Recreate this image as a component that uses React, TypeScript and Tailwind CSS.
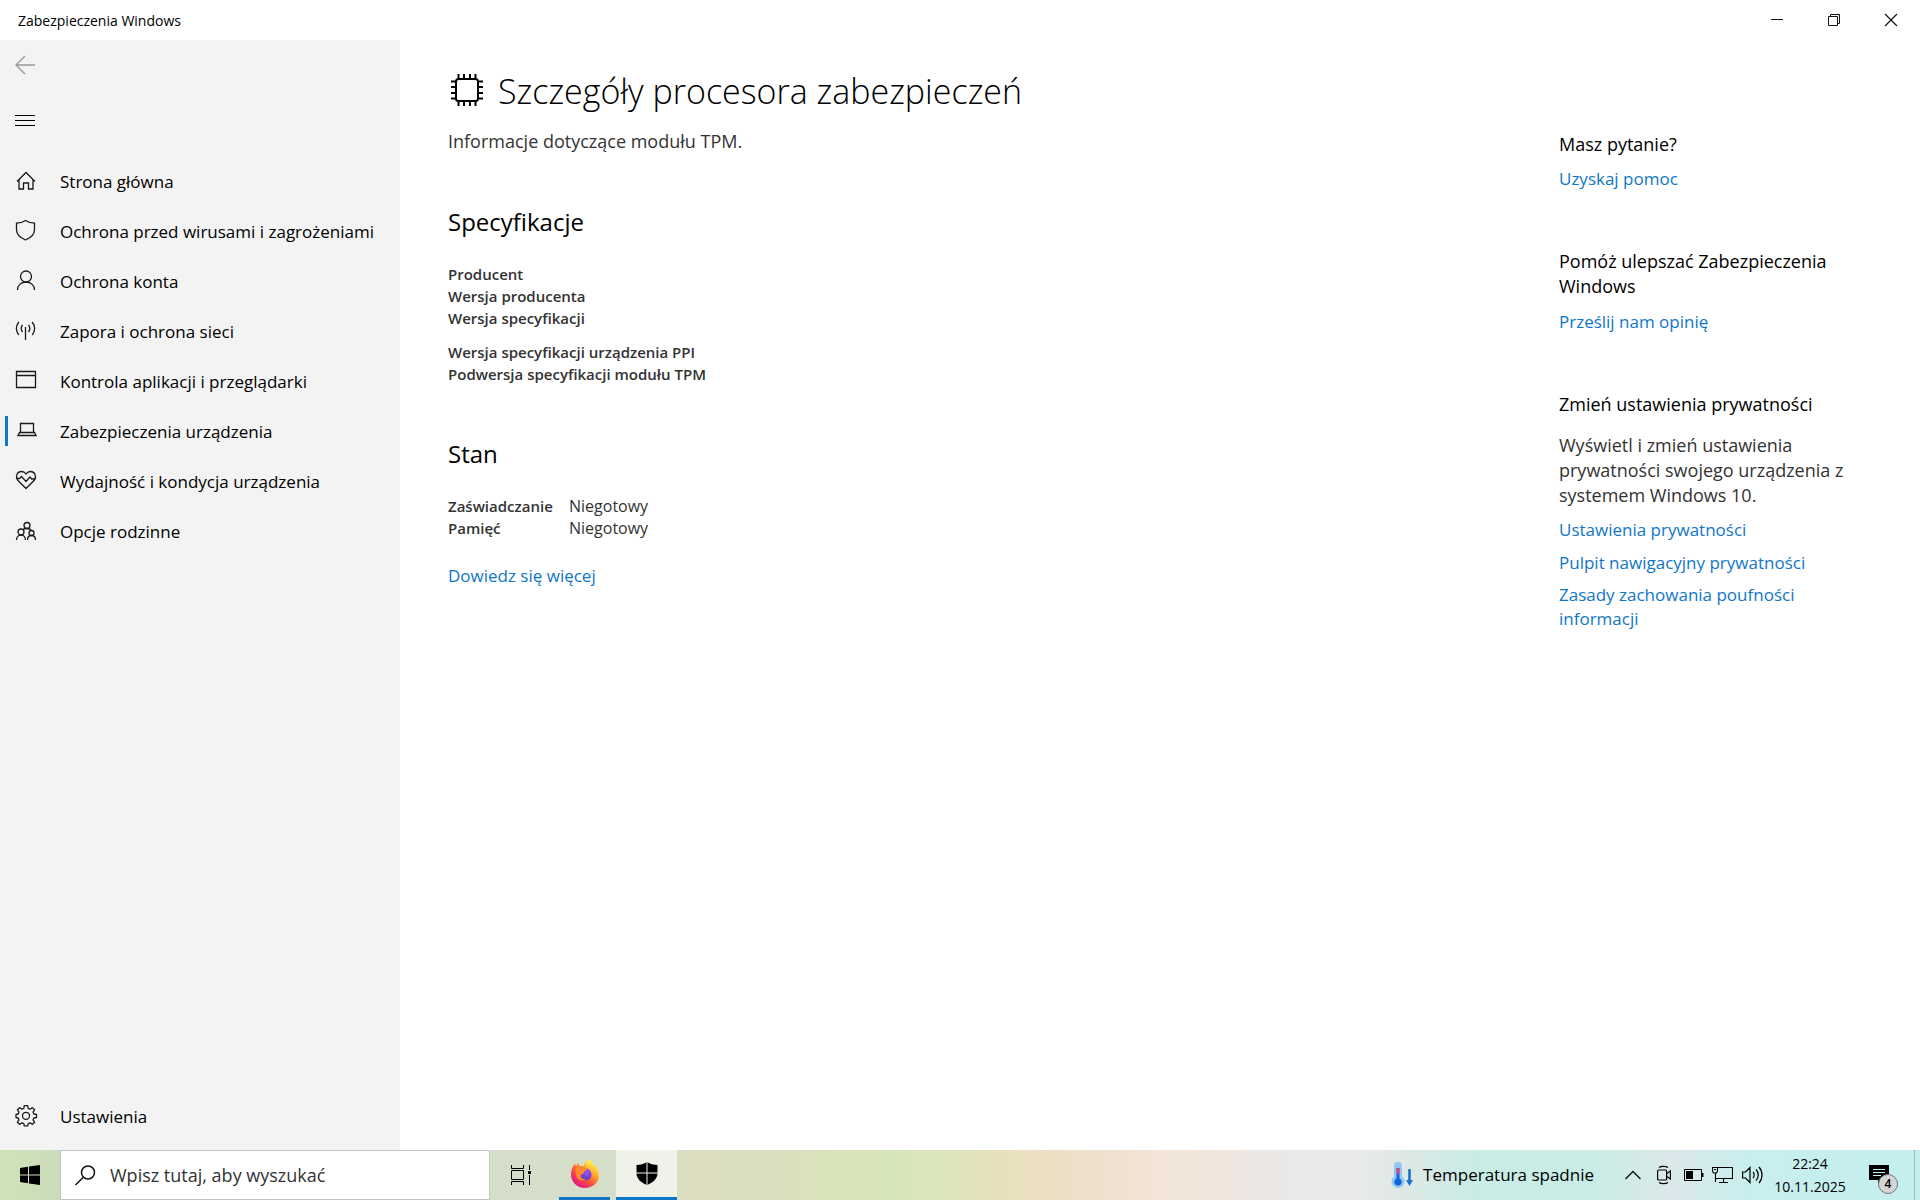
import React from 'react';

interface NavItemProps {
    label: string;
    active?: boolean;
    children: React.ReactNode;
}

const NavItem: React.FC<NavItemProps> = ({ label, active, children }) => {
    return (
        <button
            type="button"
            aria-current={active ? 'page' : undefined}
            className="flex h-[50px] w-full items-center pl-[5px] text-left text-[17px] leading-6 whitespace-nowrap text-black"
        >
            <span className={active ? 'h-[30px] w-[3px] bg-[#0f76c8]' : 'h-[30px] w-[3px]'} />
            <svg
                className="mr-[22px] ml-[6px] h-6 w-6 shrink-0"
                viewBox="0 0 24 24"
                fill="none"
                stroke="#1a1a1a"
                strokeWidth="1.3"
                aria-hidden="true"
            >
                {children}
            </svg>
            <span className="pt-0.5">{label}</span>
        </button>
    );
};

const TitleBar: React.FC = () => {
    return (
        <header className="flex h-10 shrink-0 items-center justify-between bg-white">
            <span className="pt-0.5 pl-[18px] text-sm text-black">Zabezpieczenia Windows</span>
            <div className="flex h-full">
                <button type="button" aria-label="Minimalizuj" className="flex w-[57px] items-center justify-center">
                    <svg width="14" height="14" viewBox="0 0 14 14" stroke="#111" aria-hidden="true">
                        <path d="M1 6.5h12" />
                    </svg>
                </button>
                <button type="button" aria-label="Przywróć" className="flex w-[57px] items-center justify-center">
                    <svg width="14" height="14" viewBox="0 0 14 14" fill="none" stroke="#111" aria-hidden="true">
                        <path d="M1.5 3.5h9v9h-9zM3.5 3.5v-2h9v9h-2" />
                    </svg>
                </button>
                <button type="button" aria-label="Zamknij" className="flex w-[58px] items-center justify-center">
                    <svg width="14" height="14" viewBox="0 0 14 14" stroke="#111" strokeWidth="1.2" aria-hidden="true">
                        <path d="M1 1l12 12M13 1L1 13" />
                    </svg>
                </button>
            </div>
        </header>
    );
};

const Sidebar: React.FC = () => {
    return (
        <nav className="flex w-[400px] shrink-0 flex-col bg-[#f3f3f3] pb-[9px]">
            <button type="button" aria-label="Wstecz" className="flex h-[50px] w-[50px] items-center justify-center">
                <svg width="20" height="20" viewBox="0 0 20 20" fill="none" stroke="#999" strokeWidth="1.4" aria-hidden="true">
                    <path d="M10 1L1 10l9 9M1 10h19" />
                </svg>
            </button>
            <button type="button" aria-label="Menu" className="mt-[6px] mb-[10px] flex h-[50px] w-[50px] items-center justify-center">
                <svg width="20" height="12" viewBox="0 0 20 12" stroke="#000" aria-hidden="true">
                    <path d="M0 .5h20M0 5.5h20M0 10.5h20" />
                </svg>
            </button>
            <NavItem label="Strona główna">
                <path d="M3 12.5l9-9 9 9M5 11v9h4.500v-6h5v6H19v-9" />
            </NavItem>
            <NavItem label="Ochrona przed wirusami i zagrożeniami">
                <path d="M11.500 1.500c3 2 6 2.700 9 2.700v6.300c0 5-4 8.500-9 10.500-5-2-9-5.500-9-10.500V4.200c3 0 6-.7 9-2.700z" />
            </NavItem>
            <NavItem label="Ochrona konta">
                <circle cx="12" cy="7.500" r="5.500" />
                <path d="M3.500 21c0-5 4-8 8.500-8s8.500 3 8.500 8" />
            </NavItem>
            <NavItem label="Zapora i ochrona sieci">
                <path d="M11.500 8v13M8.500 6c-1.500 2-1.500 5 0 7M14.500 6c1.500 2 1.500 5 0 7M4.800 3c-3 4-3 9 0 13M18.200 3c3 4 3 9 0 13" />
            </NavItem>
            <NavItem label="Kontrola aplikacji i przeglądarki">
                <path d="M2.500 2.500h19v16h-19zM2.500 6.500h19" />
            </NavItem>
            <NavItem label="Zabezpieczenia urządzenia" active>
                <path d="M6.500 13V4.500h13V13M5.500 13.500h15l1.500 3H4zM6.500 13.500h13" />
            </NavItem>
            <NavItem label="Wydajność i kondycja urządzenia">
                <path d="M12 19.500L3.500 11c-2-3-1-8.500 4-8.500 2 0 3.500 1 4.500 2.500 1-1.500 2.500-2.500 4.500-2.500 5 0 6 5.500 4 8.500z" />
                <path d="M3 9.500h2.500l2-2 4.500 5 4-4.500 1.700 2h3.500" />
            </NavItem>
            <NavItem label="Opcje rodzinne">
                <circle cx="13" cy="6.500" r="3" />
                <circle cx="7" cy="13" r="3" />
                <circle cx="17.500" cy="14" r="2.500" />
                <path d="M2.500 21c0-3 2-5 4.500-5s4.500 2 4.500 5M13.500 21c0-2.500 1.500-4.500 4-4.500s4 2 4 4.500M9 10.500c1-1 6.500-2 8.500 1" />
            </NavItem>
            <div className="mt-auto">
                <NavItem label="Ustawienia">
                    <path d="M10.300 1.700h3.400l.5 2.700 1.900.8 2.300-1.600 2.200 2.200L19 8.100l.8 1.900 2.700.5v3l-2.700.5-.8 1.900 1.600 2.300-2.200 2.200-2.300-1.600-1.900.8-.5 2.200h-3.400l-.5-2.200-1.900-.8-2.300 1.600-2.200-2.200L5 15.900 4.200 14l-2.200-.5v-3l2.200-.5L5 8.100 3.400 5.800l2.200-2.200 2.300 1.600 1.900-.8z" strokeLinejoin="round" />
                    <circle cx="12" cy="11.800" r="3.500" />
                </NavItem>
            </div>
        </nav>
    );
};

const SpecTable: React.FC<{ labels: string[] }> = ({ labels }) => {
    return (
        <table className="text-left text-[15px] leading-[22px] text-[#333]">
            <tbody>
                {labels.map((label) => (
                    <tr key={label}>
                        <th scope="row" className="p-0 font-semibold">{label}</th>
                        <td className="p-0" />
                    </tr>
                ))}
            </tbody>
        </table>
    );
};

const Details: React.FC = () => {
    return (
        <main className="flex-1 pt-7 pl-12">
            <div className="flex items-center gap-[14px]">
                <svg className="h-9 w-9" viewBox="0 0 36 36" fill="none" stroke="#000" strokeWidth="2" aria-hidden="true">
                    <rect x="8" y="6" width="22" height="22" rx="2.500" />
                    <path d="M10.500 1v5M16 1v5M22 1v5M27.500 1v5M10.500 28v5M16 28v5M22 28v5M27.500 28v5M3 8.500h5M3 14h5M3 20h5M3 25.500h5M30 8.500h5M30 14h5M30 20h5M30 25.500h5" />
                </svg>
                <h1 className="text-[34px] leading-[46px] font-light text-black">Szczegóły procesora zabezpieczeń</h1>
            </div>
            <p className="mt-[15px] text-lg leading-6 text-[#333]">Informacje dotyczące modułu TPM.</p>

            <h2 className="mt-[53px] text-2xl text-black">Specyfikacje</h2>
            <div className="mt-[25px] flex flex-col gap-3">
                <SpecTable labels={['Producent', 'Wersja producenta', 'Wersja specyfikacji']} />
                <SpecTable labels={['Wersja specyfikacji urządzenia PPI', 'Podwersja specyfikacji modułu TPM']} />
            </div>

            <h2 className="mt-[53px] text-2xl text-black">Stan</h2>
            <table className="mt-[25px] text-left text-[15px] leading-[22px] text-[#333]">
                <tbody>
                    <tr>
                        <th scope="row" className="w-[121px] p-0 font-semibold">Zaświadczanie</th>
                        <td className="p-0 text-base leading-[22px]">Niegotowy</td>
                    </tr>
                    <tr>
                        <th scope="row" className="p-0 font-semibold">Pamięć</th>
                        <td className="p-0 text-base leading-[22px]">Niegotowy</td>
                    </tr>
                </tbody>
            </table>
            <a href="#" className="mt-[25px] inline-block text-[17px] leading-6 text-[#0f76c8]">Dowiedz się więcej</a>
        </main>
    );
};

const HelpPanel: React.FC = () => {
    return (
        <aside className="flex w-[361px] shrink-0 flex-col gap-[58px] pt-[92px] pr-[60px] text-lg leading-[25px] text-[#333]">
            <section className="flex flex-col items-start gap-[9px]">
                <h3 className="text-black">Masz pytanie?</h3>
                <a href="#" className="text-[17px] leading-[25px] text-[#0f76c8]">Uzyskaj pomoc</a>
            </section>
            <section className="flex flex-col items-start gap-[10px]">
                <h3 className="text-black">Pomóż ulepszać Zabezpieczenia Windows</h3>
                <a href="#" className="text-[17px] leading-[25px] text-[#0f76c8]">Prześlij nam opinię</a>
            </section>
            <section className="flex flex-col items-start gap-2">
                <h3 className="mb-2 text-black">Zmień ustawienia prywatności</h3>
                <p className="mb-px">Wyświetl i zmień ustawienia prywatności swojego urządzenia z systemem Windows 10.</p>
                <a href="#" className="text-[17px] leading-[25px] text-[#0f76c8]">Ustawienia prywatności</a>
                <a href="#" className="text-[17px] leading-[25px] text-[#0f76c8]">Pulpit nawigacyjny prywatności</a>
                <a href="#" className="text-[17px] leading-6 text-[#0f76c8]">Zasady zachowania poufności informacji</a>
            </section>
        </aside>
    );
};

const FirefoxIcon: React.FC = () => {
    return (
        <svg width="28" height="30" viewBox="0 0 28 30" aria-hidden="true">
            <defs>
                <linearGradient id="fox" x1="0.85" y1="0.1" x2="0.2" y2="0.9">
                    <stop offset="0" stopColor="#fff44f" />
                    <stop offset="0.3" stopColor="#ffb02e" />
                    <stop offset="0.6" stopColor="#ff5a36" />
                    <stop offset="1" stopColor="#e31587" />
                </linearGradient>
                <linearGradient id="tail" x1="0" y1="0" x2="0" y2="1">
                    <stop offset="0" stopColor="#fff44f" />
                    <stop offset="1" stopColor="#ff9a2e" stopOpacity="0" />
                </linearGradient>
                <radialGradient id="globe" cx="0.6" cy="0.3" r="0.8">
                    <stop offset="0" stopColor="#a14ff5" />
                    <stop offset="1" stopColor="#4b3bb8" />
                </radialGradient>
            </defs>
            <path d="M18 .5c3 2 4 4.500 4.500 6.500 1-.2 1.500-1 1.500-1 3 3.500 4 6.500 4 10 0 7.500-6 13-14 13S0 23 0 15.500C0 11 1.500 8 3 6l.5-1.500L5 7l2-3 2 3h4c0-2.500 2-5 5-6.500z" fill="url(#fox)" />
            <circle cx="14.500" cy="15.500" r="6" fill="url(#globe)" />
            <path d="M5 8c3-1.500 6-1 8 .5 1 1 2.500 1 3.500 1-.5 2-3.500 2.500-3.500 3.500 0 1.500-1.500 2-3 2.500-1.500 3 2 5.500 5 4.500-3 3-9 1-10-4C4.500 13 4 10.500 5 8z" fill="#ff8a2a" />
            <path d="M18 .5c3 2 4 4.500 4.500 6.500 2 3 2.500 9-1.500 13 1-5-1-9-4-11S14 3 18 .5z" fill="url(#tail)" />
        </svg>
    );
};

const Taskbar: React.FC = () => {
    return (
        <footer className="flex h-[50px] shrink-0 items-stretch bg-[linear-gradient(90deg,#cfe4b8_0%,#cbdcbb_3%,#d5dec8_26%,#d5dfca_31%,#dddec2_36%,#dbe0bf_41%,#d8e5b9_44%,#d8e6bb_47%,#dde4bc_50%,#e8e1bb_52%,#eedfc9_56%,#f3e6d9_61%,#efe5dd_64%,#e9e9ea_67%,#e8ebea_71%,#dfe8e6_73%,#c8ece6_77%,#c9ece6_83%,#dbe8ea_87%,#c9eeee_91%,#c4eeee_100%)] text-black">
            <button type="button" aria-label="Start" className="flex w-[60px] items-center justify-center">
                <svg width="20" height="20" viewBox="0 0 20 20" aria-hidden="true">
                    <path d="M0 3l8-1.200v7.700H0zM9 1.600L20 0v9.500H9zM0 10.500h8v7.700L0 17zM9 10.500h11V20L9 18.400z" />
                </svg>
            </button>
            <label className="flex w-[430px] items-center border border-[#c4c4c4] bg-white pl-[14px]">
                <svg width="21" height="21" viewBox="0 0 21 21" fill="none" stroke="#111" strokeWidth="1.500" aria-hidden="true">
                    <circle cx="13" cy="7.500" r="6.500" />
                    <path d="M8.300 12.200L.5 20" />
                </svg>
                <input
                    type="text"
                    aria-label="Wyszukaj"
                    placeholder="Wpisz tutaj, aby wyszukać"
                    className="ml-[14px] flex-1 bg-transparent text-lg text-black outline-none placeholder:text-[#333]"
                />
            </label>
            <button type="button" aria-label="Widok zadań" className="flex w-[61px] items-center justify-center">
                <svg width="22" height="20" viewBox="0 0 22 20" fill="none" stroke="#000" aria-hidden="true">
                    <path d="M1.500 0v3.500h12V0M1.500 5.500h12v9h-12zM1.500 20v-3.500h12V20M19.500 0v5M19.500 10v10" />
                    <path d="M18 6h3v3h-3z" fill="#000" stroke="none" />
                </svg>
            </button>
            <button type="button" aria-label="Firefox" className="mr-[6px] ml-2 flex w-[51px] items-center justify-center border-b-[3px] border-[#0f76c8]">
                <FirefoxIcon />
            </button>
            <button type="button" aria-label="Zabezpieczenia Windows" className="flex w-[61px] items-center justify-center border-b-[3px] border-[#0f76c8] bg-[#eff2e9]">
                <svg width="22" height="23" viewBox="0 0 22 23" aria-hidden="true">
                    <path d="M11 0c3 2 6.500 3 10.500 3v8c0 5.500-4 9.500-10.500 12C4.500 20.500.5 16.500.5 11V3C4.500 3 8 2 11 0z" />
                    <path d="M11 0v23M0 11h22" stroke="#eff2e9" />
                </svg>
            </button>

            <div className="ml-auto flex items-center">
                <button type="button" className="flex items-center gap-2 text-[17px] whitespace-nowrap">
                    <svg width="24" height="28" viewBox="0 0 24 28" aria-hidden="true">
                        <path d="M3 5a4 4 0 0 1 8 0v10.500a6.500 6.500 0 1 1-8 0z" fill="#93c8f5" />
                        <path d="M5.500 7h3v10.500a3.800 3.800 0 1 1-3 0z" fill="#1266d6" />
                        <path d="M5.500 7h3v6h-3z" fill="#c9527c" />
                        <path d="M17.200 8h2.600v11H22l-3.500 6-3.500-6h2.200z" fill="#1a6fd0" />
                    </svg>
                    Temperatura spadnie
                </button>
                <button type="button" aria-label="Pokaż ukryte ikony" className="ml-[31px]">
                    <svg width="16" height="10" viewBox="0 0 16 10" fill="none" stroke="#111" strokeWidth="1.400" aria-hidden="true">
                        <path d="M.5 9L8 1.500 15.500 9" />
                    </svg>
                </button>
                <button type="button" aria-label="Kamera" className="ml-4">
                    <svg width="14" height="20" viewBox="0 0 14 20" fill="none" stroke="#000" strokeWidth="1.200" aria-hidden="true">
                        <path d="M2 2.500c2-1.500 7-1.500 9 0M2 17.500c2 1.500 7 1.500 9 0" />
                        <rect x=".6" y="5" width="9" height="10" rx="1" />
                        <path d="M10 8.500l3.400-2.500v8L10 11.500" />
                    </svg>
                </button>
                <button type="button" aria-label="Bateria" className="ml-[13px]">
                    <svg width="20" height="12" viewBox="0 0 20 12" aria-hidden="true">
                        <path d="M.5.5h17v11H.5z" fill="none" stroke="#000" />
                        <path d="M2 2h7v8H2zM18 4h1.500v4H18z" />
                    </svg>
                </button>
                <button type="button" aria-label="Sieć" className="ml-2">
                    <svg width="21" height="18" viewBox="0 0 21 18" fill="none" stroke="#000" strokeWidth="1.100" aria-hidden="true">
                        <path d="M6 1.500h14.500v11H3.500V7M.5 1.500h5V5L4.500 7h-3L.5 5zM2 3.500h2M11.500 12.500v4M7 16.500h9M3.500 7v9" />
                    </svg>
                </button>
                <button type="button" aria-label="Głośność" className="ml-[9px]">
                    <svg width="22" height="20" viewBox="0 0 22 20" fill="none" stroke="#000" strokeWidth="1.200" aria-hidden="true">
                        <path d="M.6 7h3l4.400-4.500v15L3.600 13h-3zM11 7c1.500 1.500 1.500 4.500 0 6M14 4.500c3 3 3 8 0 11M17 2c4 4.500 4 11.500 0 16" />
                    </svg>
                </button>
                <div className="ml-2 w-[76px] text-center text-sm leading-[23px]">
                    <div>22:24</div>
                    <div>10.11.2025</div>
                </div>
                <button type="button" aria-label="Powiadomienia" className="relative mr-[25px] ml-[21px]">
                    <svg width="20" height="20" viewBox="0 0 20 20" aria-hidden="true">
                        <path d="M0 0h20v15h-7l-4 4v-4H0z" />
                        <path d="M4 4.500h12M4 7.500h12M4 10.500h8" stroke="#c4eeee" />
                    </svg>
                    <span className="absolute top-[9px] left-[9px] flex h-5 w-5 items-center justify-center rounded-full border border-[#777] bg-[#d5d5d5] text-xs font-semibold">4</span>
                </button>
                <span className="mr-[5px] h-[50px] w-px bg-[#9db8b8]" />
            </div>
        </footer>
    );
};

const App: React.FC = () => {
    return (
        <div className="flex h-screen flex-col bg-white font-['Open_Sans','Noto_Sans',sans-serif]">
            <TitleBar />
            <div className="flex min-h-0 flex-1">
                <Sidebar />
                <Details />
                <HelpPanel />
            </div>
            <Taskbar />
        </div>
    );
};

export default App;
